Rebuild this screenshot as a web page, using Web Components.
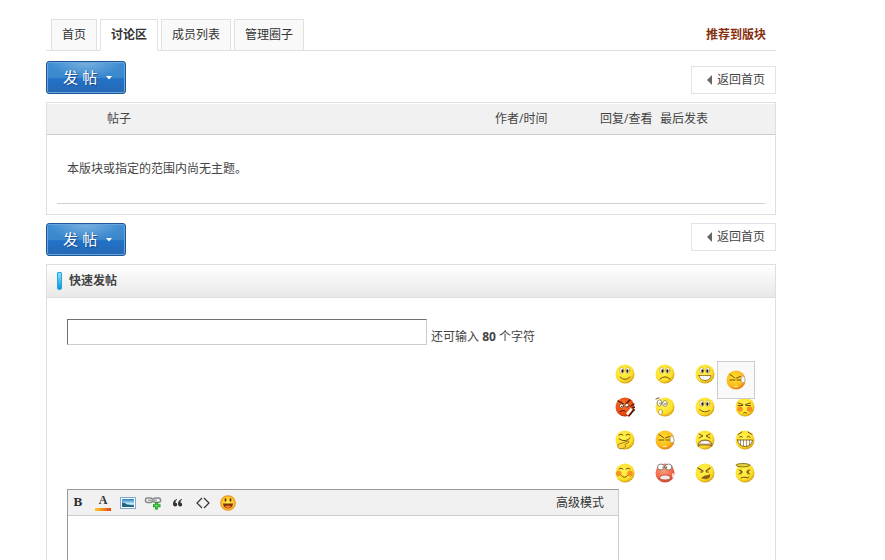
<!DOCTYPE html>
<html lang="zh-CN">
<head>
<meta charset="utf-8">
<title>讨论区</title>
<style>
    body {
        margin: 0;
        background: #fff;
        color: #444;
        font: 12px/20px "Open Sans", "Noto Sans CJK SC", sans-serif;
    }
    main {
        margin: 19px 109px 0 46px;
    }
</style>
</head>
<body>
<main>
    <group-tabs>
        <tab-link>首页</tab-link>
        <tab-link active>讨论区</tab-link>
        <tab-link>成员列表</tab-link>
        <tab-link>管理圈子</tab-link>
        <recommend-link slot="side">推荐到版块</recommend-link>
    </group-tabs>
    <action-row class="top"></action-row>
    <thread-list></thread-list>
    <action-row class="bottom"></action-row>
    <side-panel heading="快速发帖">
        <quick-post></quick-post>
    </side-panel>
</main>

<script>
class GroupTabs extends HTMLElement {
    constructor() {
        super();
        this.attachShadow({ mode: 'open' });
        this.shadowRoot.innerHTML = `
            <style>
                :host {
                    display: flex;
                    justify-content: space-between;
                    align-items: center;
                    padding: 0 10px 0 5px;
                    box-shadow: inset 0 -1px #dfdfdf;
                }
                nav {
                    display: flex;
                    gap: 3px;
                }
            </style>
            <nav><slot></slot></nav>
            <slot name="side"></slot>
        `;
    }
}

class TabLink extends HTMLElement {
    constructor() {
        super();
        this.attachShadow({ mode: 'open' });
        this.shadowRoot.innerHTML = `
            <style>
                :host { display: block; }
                a {
                    display: block;
                    padding: 0 10px;
                    border: 1px solid #e1e1e1;
                    background: #f9f9f9;
                    color: #333;
                    line-height: 30px;
                    text-decoration: none;
                }
                :host([active]) a {
                    border-bottom-color: #fff;
                    background: #fff;
                    font-weight: bold;
                }
            </style>
            <a href="#"><slot></slot></a>
        `;
    }
}

class RecommendLink extends HTMLElement {
    constructor() {
        super();
        this.attachShadow({ mode: 'open' });
        this.shadowRoot.innerHTML = `
            <style>
                :host { display: block; }
                a {
                    color: #862f0e;
                    font-weight: bold;
                    text-decoration: none;
                }
            </style>
            <a href="#"><slot></slot></a>
        `;
    }
}

// new post button on the left, back link on the right
class ActionRow extends HTMLElement {
    constructor() {
        super();
        this.attachShadow({ mode: 'open' });
        this.shadowRoot.innerHTML = `
            <style>
                :host {
                    display: flex;
                    justify-content: space-between;
                    align-items: flex-start;
                    padding: 8px 0;
                }
                :host(.top) {
                    align-items: flex-end;
                    padding-top: 10px;
                }
                button {
                    display: flex;
                    align-items: center;
                    gap: 9px;
                    box-sizing: border-box;
                    width: 80px;
                    height: 33px;
                    padding: 0 0 0 16px;
                    border: 1px solid #1b5796;
                    border-radius: 3px;
                    background:
                        radial-gradient(ellipse 36px 16px at 50% 0, rgba(255, 255, 255, .3), transparent),
                        linear-gradient(#3f8fd4, #3a87cc 50%, #2272c8 54%, #2668b4);
                    box-shadow: inset 0 0 0 1px #6aa5dc;
                    color: #fff;
                    font: 15px/20px "Liberation Sans", "Noto Sans CJK SC", sans-serif;
                    text-shadow: 1px 1px 1px #1a4a86;
                }
                a {
                    display: flex;
                    align-items: center;
                    gap: 5px;
                    padding: 0 10px 0 15px;
                    border: 1px solid #dfe4ea;
                    color: #444;
                    line-height: 26px;
                    text-decoration: none;
                }
            </style>
            <button type="button">发 帖<svg width="6" height="4"><path d="M0 0h6L3 3.5z" fill="#fff"/></svg></button>
            <a href="#"><svg width="5" height="10"><path d="M5 0v10L0 5z" fill="#666"/></svg>返回首页</a>
        `;
    }
}

class ThreadList extends HTMLElement {
    constructor() {
        super();
        this.attachShadow({ mode: 'open' });
        this.shadowRoot.innerHTML = `
            <style>
                :host {
                    display: block;
                    padding-top: 1px;
                    border: 1px solid #dfdfdf;
                }
                table {
                    width: 100%;
                    border-collapse: collapse;
                    table-layout: fixed;
                }
                th {
                    height: 30px;
                    padding: 0;
                    border-bottom: 1px solid #ccc;
                    background: #f1f1f1;
                    font-weight: normal;
                    text-align: left;
                }
                th:first-child { padding-left: 60px; }
                .by { width: 105px; }
                .num { width: 60px; }
                .last { width: 115px; }
                td { padding: 0 10px 10px; }
                p {
                    margin: 0;
                    padding: 0 10px;
                    border-bottom: 1px solid #c9d2d9;
                    line-height: 68px;
                }
            </style>
            <table>
                <thead>
                    <tr>
                        <th>帖子</th>
                        <th class="by">作者/时间</th>
                        <th class="num">回复/查看</th>
                        <th class="last">最后发表</th>
                    </tr>
                </thead>
                <tbody>
                    <tr><td colspan="4"><p>本版块或指定的范围内尚无主题。</p></td></tr>
                </tbody>
            </table>
        `;
    }
}

class SidePanel extends HTMLElement {
    constructor() {
        super();
        this.attachShadow({ mode: 'open' });
        this.shadowRoot.innerHTML = `
            <style>
                :host {
                    display: block;
                    border: 1px solid #dfdfdf;
                }
                h2 {
                    display: flex;
                    align-items: center;
                    gap: 7px;
                    margin: 0;
                    padding: 0 10px;
                    border-bottom: 1px solid #dfdfdf;
                    background: linear-gradient(#fff, #e8e8e8);
                    font-size: 12px;
                    line-height: 32px;
                }
                h2::before {
                    content: "";
                    box-sizing: border-box;
                    width: 5px;
                    height: 18px;
                    border: 1px solid #22a7e4;
                    border-radius: 1px 1px 2px 2px;
                    background: linear-gradient(#8fe0fa, #0b93dc);
                }
            </style>
            <h2></h2>
            <slot></slot>
        `;
        this.shadowRoot.querySelector('h2').textContent = this.getAttribute('heading');
    }
}

// features of each face, on a 20x20 grid
const eyes = `
    <g fill="#fff" stroke="#a5801a" stroke-width=".5"><ellipse cx="6.800" cy="6.500" rx="2.100" ry="3"/><ellipse cx="12.800" cy="6.500" rx="2.100" ry="3"/></g>
    <g fill="#2a1c08" stroke="none"><ellipse cx="7.400" cy="7" rx="1.100" ry="1.700"/><ellipse cx="12.400" cy="7" rx="1.100" ry="1.700"/></g>`;
const wink = `
    <path d="M4 4.500l5 3.500M4 10h5M11 10h4M10.500 8l4-1.500"/>
    <path d="M16.800 5.500c-2.500 4-1.800 7 .3 7s2.800-3-.3-7z" fill="#fff" stroke="#8ba6b8" stroke-width=".6"/>`;
const faces = {
    smile: { art: eyes + '<path d="M5 13q5 5 10 0"/>' },
    sad: { art: eyes + '<path d="M5 15q5-4.500 10 0"/>' },
    biggrin: { art: eyes + '<path d="M4 11.500h12q-1 5-6 5t-6-5z" fill="#fff" stroke-width=".7"/>' },
    huffy: {
        tone: 'red',
        art: `<path d="M3 4l5 2.500M15 3l-4 3.500" stroke="#4b1706" stroke-width="1.300"/>
            <g fill="#fff" stroke="#5d1608" stroke-width=".6"><circle cx="6.500" cy="9" r="2"/><circle cx="12" cy="8.500" r="2"/></g>
            <path d="M6.500 9.500h.5M12 9.500h.5M5 14.500q3-2 5-.5" stroke="#4b1706"/>
            <path d="M11 16.500l5-6 2 1.500-5 6.500z" fill="#fff" stroke="none"/>
            <path d="M16 9l3-2M17 11l3-1M18 13h2M14 19l4-5" stroke="#4b1706" stroke-width="1.300"/>`
    },
    shocked: {
        art: `<g fill="#fff" stroke="#6f6a5a" stroke-width=".7"><ellipse cx="4.500" cy="6" rx="2.300" ry="3.200"/><ellipse cx="10" cy="6.500" rx="2.200" ry="3"/></g>
            <path d="M5 6v1M10 6.500v1M1 2l3-1.200"/>
            <ellipse cx="5.500" cy="15" rx="1.900" ry="2.500" fill="#fff" stroke="#a08b35" stroke-width=".7"/>`
    },
    tongue: { art: eyes + '<path d="M4.500 12.500q5 4.500 10 1"/>' },
    shy: {
        art: `<g fill="#f4731b" stroke="none" opacity=".75"><circle cx="5" cy="12" r="2.700"/><circle cx="14.500" cy="12" r="2.700"/></g>
            <path d="M3 6l5 1.500M3 8.500h4.500M10.500 7.500l5-1.500M11 8.500h4.500M8.500 16q1.500-1.500 3 0"/>`
    },
    titter: {
        art: `<path d="M4 5q2-2 4 0M11 5q2-2 4 0M4 9q7 4 11-1"/>
            <path d="M4 18.500q-3-3 0-4.500l9-3q2 0 .5 1.500L10 14.500q2 3-2 4z" fill="#ffd634" stroke="#8f6810" stroke-width=".8"/>`
    },
    sweat: { tone: 'orange', art: wink + '<path d="M8.500 16.500q1.500-1 3 0" stroke="#fff2bd"/>' },
    cry: {
        art: `<path d="M4 4l4 2-4 2M15 4l-4 2 4 2"/>
            <path d="M3 16q0-6 7-6t7 6l-3-1H6z" fill="#c9a68a" stroke-width=".8"/>
            <path d="M5.500 12q4.500-2 9 0v1.500h-9z" fill="#fff" stroke="none"/>`
    },
    lol: {
        art: `<path d="M3 4.500L7 2M13 2l4 2.500M4.500 7q1.500-1.500 3 0M12 7q1.500-1.500 3 0"/>
            <path d="M2.500 10h15q-1 6.500-7.500 6.500t-7.500-6.500z" fill="#fff" stroke-width=".8"/>
            <path d="M5.500 10v5M8.500 10v6M11.500 10v6M14.500 10v5" stroke-width=".6"/>`
    },
    loveliness: {
        art: `<g fill="#f97822" stroke="none" opacity=".8"><circle cx="3.800" cy="10.500" r="2.700"/><circle cx="15" cy="10.500" r="2.700"/></g>
            <path d="M4 6q2-2 4 0M11 6q2-2 4 0M6.500 12.500q3 4 6 0"/>`
    },
    funk: {
        tone: 'pink',
        art: `<g fill="#fff" stroke="#6e6763" stroke-width=".8"><ellipse cx="6" cy="4" rx="3.500" ry="3"/><ellipse cx="13.500" cy="4" rx="3.500" ry="3"/></g>
            <path d="M8 4v1M11.500 4v1"/>
            <path d="M4.500 15.500q0-3.500 5.500-3.500t5.500 3.500q-2 1.500-5.500 1.500t-5.500-1.500z" fill="#f6e9e8" stroke="#9b3929" stroke-width=".7"/>
            <path d="M18 11v3" stroke="#fff" stroke-width="1.500"/>`
    },
    curse: {
        art: `<path d="M3 5l5 3M15 5l-4 3M5.500 9h2M11.500 9h2" stroke-width="1.200"/>
            <path d="M7 15q1-2.500 6-2.500l2-1q0 4-3.500 4.300-3.500.2-4.500-.8z" fill="#8a6415" stroke-width=".6"/>`
    },
    dizzy: {
        art: `<ellipse cx="8" cy="2.200" rx="7" ry="1.700" fill="#e8cc3e" stroke="#7a7018" stroke-width=".9"/>
            <path d="M4 7l3.500 2L4 11M6 7v4M15 7l-3.500 2 3.500 2M13 7v4M6 15q3-1.500 5-.5t3-.5"/>`
    }
};
const tones = {
    yellow: ['#fff452', '#ffe02a', '#cf9510'],
    orange: ['#ffe32e', '#fdb81c', '#de7208'],
    red: ['#fb7c2c', '#ec4a12', '#b02f08'],
    pink: ['#fb9f7c', '#f26648', '#c84031']
};

class SmileyFace extends HTMLElement {
    constructor() {
        super();
        this.attachShadow({ mode: 'open' });
        const face = faces[this.getAttribute('name')];
        const [light, mid, dark] = tones[face.tone || 'yellow'];
        this.shadowRoot.innerHTML = `
            <style>
                :host {
                    display: block;
                    width: 20px;
                    height: 20px;
                }
                svg { display: block; }
            </style>
            <svg width="20" height="20" viewBox="0 0 20 20">
                <radialGradient id="skin" cx="42%" cy="38%" r="66%">
                    <stop offset="0" stop-color="${light}"/>
                    <stop offset=".7" stop-color="${mid}"/>
                    <stop offset="1" stop-color="${dark}"/>
                </radialGradient>
                <circle cx="10" cy="10" r="9.500" fill="url(#skin)"/>
                <g fill="none" stroke="#755010" stroke-linecap="round">${face.art}</g>
            </svg>
        `;
    }
}

class SmileyPicker extends HTMLElement {
    constructor() {
        super();
        this.attachShadow({ mode: 'open' });
        const names = ['smile', 'sad', 'biggrin', 'cry', 'huffy', 'shocked', 'tongue', 'shy',
            'titter', 'sweat', 'cry', 'lol', 'loveliness', 'funk', 'curse', 'dizzy'];
        this.shadowRoot.innerHTML = `
            <style>
                :host {
                    display: grid;
                    grid-template-columns: repeat(4, 40px);
                    grid-auto-rows: 33px;
                    place-items: center;
                    position: relative;
                }
                button {
                    padding: 0;
                    border: 0;
                    background: none;
                }
                /* enlarged preview over the hovered corner */
                .preview {
                    display: grid;
                    place-items: center;
                    box-sizing: border-box;
                    position: absolute;
                    top: 4px;
                    right: 10px;
                    width: 38px;
                    height: 38px;
                    border: 1px solid #ccc;
                    background: #f9f9f9;
                }
            </style>
            ${names.map((name) => `<button type="button" aria-label="${name}"><smiley-face name="${name}"></smiley-face></button>`).join('')}
            <div class="preview"><smiley-face name="sweat"></smiley-face></div>
        `;
    }
}

class PostEditor extends HTMLElement {
    constructor() {
        super();
        this.attachShadow({ mode: 'open' });
        this.shadowRoot.innerHTML = `
            <style>
                :host {
                    display: block;
                    border: 1px solid;
                    border-color: #999 #ccc #ccc #999;
                }
                .bar {
                    display: flex;
                    align-items: center;
                    gap: 5px;
                    height: 25px;
                    padding-right: 14px;
                    border-bottom: 1px solid #ccc;
                    background: #f1f1f1;
                }
                button {
                    display: grid;
                    place-items: center;
                    width: 20px;
                    height: 20px;
                    padding: 0;
                    border: 0;
                    background: none;
                    color: #333;
                    font: bold 13px/20px "DejaVu Serif", serif;
                    font-size: 11px;
                }
                .color {
                    height: 18px;
                    font: bold 12px/13px "Liberation Serif", serif;
                }
                .color::after {
                    content: "";
                    width: 16px;
                    height: 3px;
                    background: linear-gradient(90deg, #fdc72d, #f08a1c, #e8421a);
                }
                a {
                    margin-left: auto;
                    color: #333;
                    text-decoration: none;
                }
                textarea {
                    display: block;
                    box-sizing: border-box;
                    width: 100%;
                    height: 120px;
                    padding: 5px;
                    border: 0;
                    outline: 0;
                    resize: none;
                    font: inherit;
                }
            </style>
            <div class="bar">
                <button type="button">B</button>
                <button type="button" class="color">A</button>
                <button type="button" aria-label="图片">
                    <svg width="16" height="14">
                        <defs><linearGradient id="sky" x2="0" y2="1"><stop stop-color="#237fc5"/><stop offset=".6" stop-color="#c8ebf8"/><stop offset="1" stop-color="#2475a9"/></linearGradient></defs>
                        <rect x=".5" y="1.500" width="15" height="11" fill="#fff" stroke="#7eaad0"/>
                        <path d="M2 3h12v8H2z" fill="url(#sky)"/>
                        <path d="M2 6.500q3 0 5 2l7 1V11H2z" fill="#24647e"/>
                    </svg>
                </button>
                <button type="button" aria-label="链接">
                    <svg width="18" height="14" fill="none">
                        <g stroke="#888" stroke-width="1.500"><rect x="1.500" y="2" width="7" height="4.500" rx="2"/><rect x="9.500" y="2" width="7" height="4.500" rx="2"/></g>
                        <path d="M4 4.300h9" stroke="#aaa" stroke-width="1.500"/>
                        <path d="M12.500 6v7.500M9 9.800h7.500" stroke="#159a1c" stroke-width="3"/>
                        <path d="M12.500 7v5.500M10 9.800h5.500" stroke="#56d252" stroke-width="1.500"/>
                    </svg>
                </button>
                <button type="button" aria-label="引用">
                    <svg width="10" height="8" fill="#333"><path d="M4 0Q0 1 0 4.800 0 7.500 2.200 7.500t2-2-1.900-1.900Q2.500 1.500 4 .8zM9 0Q5 1 5 4.800 5 7.500 7.200 7.500t2-2-1.900-1.900Q7.500 1.500 9 .8z"/></svg>
                </button>
                <button type="button" aria-label="代码">
                    <svg width="14" height="12" fill="none" stroke="#333" stroke-width="1.200"><path d="M6 1L1 6l5 5M8 1l5 5-5 5"/></svg>
                </button>
                <button type="button" aria-label="表情">
                    <svg width="16" height="16">
                        <defs><radialGradient id="glow"><stop stop-color="#fff05a"/><stop offset=".75" stop-color="#fec62a"/><stop offset="1" stop-color="#ec8616"/></radialGradient></defs>
                        <circle cx="8" cy="8" r="7.800" fill="url(#glow)"/>
                        <ellipse cx="5.500" cy="5" rx=".9" ry="1.800" fill="#5c2504"/>
                        <ellipse cx="10.500" cy="5" rx=".9" ry="1.800" fill="#5c2504"/>
                        <path d="M3 8.500h10q-.5 5-5 5t-5-5z" fill="#81340a"/>
                        <path d="M4.500 11.500q3.500-2 7 0-3.500 3.500-7 0z" fill="#ef762c"/>
                    </svg>
                </button>
                <a href="#">高级模式</a>
            </div>
            <textarea aria-label="内容"></textarea>
        `;
    }
}

class QuickPost extends HTMLElement {
    constructor() {
        super();
        this.attachShadow({ mode: 'open' });
        this.shadowRoot.innerHTML = `
            <style>
                :host { display: block; }
                form {
                    display: flex;
                    flex-direction: column;
                    padding: 21px 10px 20px 20px;
                }
                .subject {
                    display: flex;
                    align-items: flex-end;
                    gap: 4px;
                    margin-bottom: 12px;
                }
                input {
                    box-sizing: border-box;
                    width: 360px;
                    height: 26px;
                    padding: 2px 4px;
                    border: 1px solid;
                    border-color: #707070 #ccc #ccc #707070;
                    outline: 0;
                    font: inherit;
                }
                label { line-height: 16px; }
                smiley-picker { align-self: flex-end; }
                post-editor {
                    width: 80%;
                    max-width: 552px;
                    box-sizing: border-box;
                }
            </style>
            <form>
                <div class="subject">
                    <input type="text" id="subject" maxlength="80">
                    <label for="subject">还可输入 <b>80</b> 个字符</label>
                </div>
                <smiley-picker></smiley-picker>
                <post-editor></post-editor>
            </form>
        `;
    }
}

customElements.define('group-tabs', GroupTabs);
customElements.define('tab-link', TabLink);
customElements.define('recommend-link', RecommendLink);
customElements.define('action-row', ActionRow);
customElements.define('thread-list', ThreadList);
customElements.define('side-panel', SidePanel);
customElements.define('smiley-face', SmileyFace);
customElements.define('smiley-picker', SmileyPicker);
customElements.define('post-editor', PostEditor);
customElements.define('quick-post', QuickPost);
</script>
</body>
</html>
